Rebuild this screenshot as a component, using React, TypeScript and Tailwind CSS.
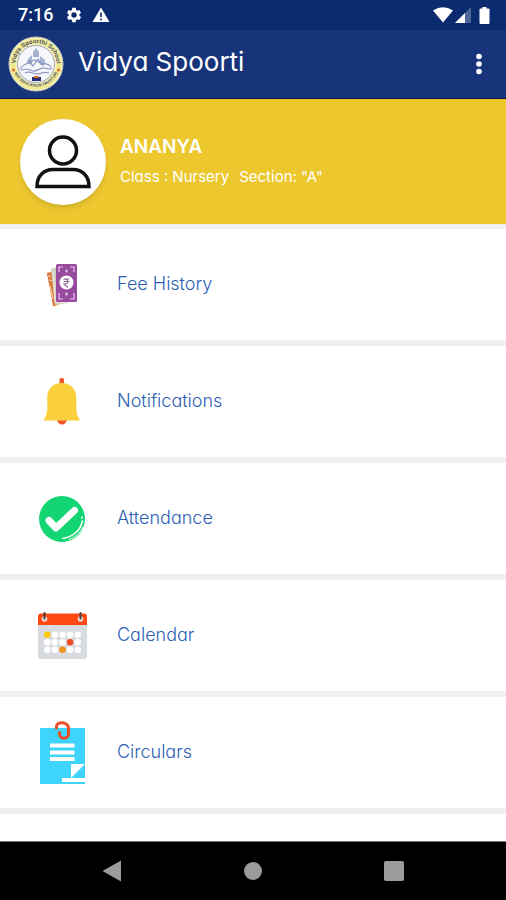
import type { ReactNode } from 'react';

const SchoolLogo = () => (
  <svg viewBox="0 0 56 56" className="size-14 shrink-0" role="img" aria-label="School logo">
    <defs>
      <path id="logo-top" d="M8.500 34 A20.500 20.500 0 1 1 47.500 34" />
      <path id="logo-bottom" d="M5.500 34 A23.500 23.500 0 0 0 50.500 34" />
    </defs>
    <circle cx="28" cy="28" r="27" fill="#f3f0c4" stroke="#c9cbb4" strokeWidth="1" />
    <circle cx="28" cy="28" r="23" fill="none" stroke="#efe98f" strokeWidth="5" />
    <circle cx="28" cy="28" r="18.500" fill="#f6f7fb" stroke="#8d93a6" strokeWidth="0.800" />
    <g fontFamily="'Liberation Sans', sans-serif" fontWeight="700" fill="#4a4e66">
      <text fontSize="6">
        <textPath href="#logo-top" startOffset="50%" textAnchor="middle">Vidya Spoorthi School</textPath>
      </text>
      <text fontSize="4">
        <textPath href="#logo-bottom" startOffset="50%" textAnchor="middle">M.P. EDUCATION TRUST (R)</textPath>
      </text>
    </g>
    <circle cx="5.500" cy="34" r="1.500" fill="#e0662e" />
    <circle cx="50.500" cy="34" r="1.500" fill="#e0662e" />
    <path d="M25 16l3-4 3 4v5h-6zM20 23l4-4v9h-5zM32 20l5 4v5h-5z" fill="#a9b1d0" />
    <path
      d="M12 33c5-7 9-5 12-8s6 1 8 2 7-1 11 4M13 34c6-2 9 0 12 1s8-4 12-3 5 2 7 0M17 37c5-3 8 1 12 1s8-3 12-1M20 24l5 6 5-7 5 7"
      fill="none"
      stroke="#8d98c3"
      strokeWidth="1.200"
    />
    <path d="M24 41h9v4h-9z" fill="#252f73" />
    <path d="M26 40h5v2h-5z" fill="#dd7435" />
  </svg>
);

const FeeIcon = () => (
  <svg viewBox="0 0 52 64" className="w-13 h-16">
    <path d="M11 20l5-1 14 29-12 5.500z" fill="#e8752f" />
    <path d="M11 20l4-.5 4 33-2 .5z" fill="#dc7a3e" />
    <path d="M12 23l3 .5M13 27l3 .5M14 33l3 13" stroke="#fbd9c0" strokeWidth="1" />
    <path d="M15 16l6-2v36l10-1 1 1-13 2z" fill="#cfd0bf" />
    <path d="M17 18l2 31 13 1" fill="none" stroke="#f2e8df" strokeWidth="1" />
    <rect x="20" y="11" width="21" height="38" rx="1.500" fill="#984a9f" />
    <path d="M23 19v-5h4M34 14h4v5M23 40v6h4M34 46h4v-6" fill="none" stroke="#e8c8eb" strokeWidth="1.200" />
    <path d="M30.500 16l1.500 2-1.500 2-1.500-2zM30.500 39l1.500 2-1.500 2-1.500-2z" fill="#e2bfe6" />
    <circle cx="30.500" cy="29.500" r="7" fill="#fff" />
    <path d="M27.500 26h6M27.500 28.500h6M28 26c5 0 5 5 0 5l4 3.500" fill="none" stroke="#93619a" strokeWidth="1.100" />
  </svg>
);

const BellIcon = () => (
  <svg viewBox="0 0 52 64" className="w-13 h-16">
    <rect x="23.500" y="8" width="4.500" height="7" rx="1.500" fill="#f0592b" />
    <path d="M21 49h10a5 5.500 0 0 1-10 0z" fill="#f0592b" />
    <path d="M25.700 13C17 13 11.300 19 11.300 27v11c0 5-1.300 8-3.800 12.500h36.500C41.500 46 40.300 43 40.300 38V27c0-8-6-14-14.600-14z" fill="#fad13d" />
  </svg>
);

const CheckIcon = () => (
  <svg viewBox="0 0 52 64" className="w-13 h-16">
    <circle cx="26" cy="32" r="23" fill="#14d574" />
    <path d="M13 33.500l7 7.500L38.500 23.500" fill="none" stroke="#fff" strokeWidth="7" strokeLinecap="round" strokeLinejoin="round" />
    <path d="M46.500 34c-2 9-9 16-20 17.500" fill="none" stroke="#fff" strokeWidth="1.500" strokeLinecap="round" />
    <path d="M46 30v1" stroke="#fff" strokeWidth="1.500" strokeLinecap="round" />
    <path d="M47 40c-3 6-7 10-14 12.500" fill="none" stroke="#fff" strokeWidth="1" />
  </svg>
);

const calendarDots = [
  ['#fdc90f', '#fff', '#fff', '#fff', '#fff'],
  ['#fff', '#fff', '#fff', '#f04b25', '#fff'],
  ['#fff', '#fff', '#ef941b', '#fff', '#fff'],
];

const CalendarIcon = () => (
  <svg viewBox="0 0 52 64" className="w-13 h-16">
    <path d="M2 18h49v34a3 3 0 0 1-3 3H5a3 3 0 0 1-3-3z" fill="#d8dbdf" />
    <path d="M5 9.500h43a3 3 0 0 1 3 3V21H2v-8.500a3 3 0 0 1 3-3z" fill="#fd4a13" />
    <circle cx="8.500" cy="15" r="2.800" fill="#e8dcda" />
    <circle cx="44.500" cy="15" r="2.800" fill="#e8dcda" />
    <path d="M8.500 9v5.500M44.500 9v5.500" stroke="#493b40" strokeWidth="2" strokeLinecap="round" />
    {calendarDots.map((row, y) =>
      row.map((color, x) => (
        <circle key={`${x}-${y}`} cx={11.3 + x * 7.6} cy={30.7 + y * 7.5} r="3.300" fill={color} />
      ))
    )}
  </svg>
);

const CircularIcon = () => (
  <svg viewBox="0 0 52 64" className="w-13 h-16">
    <path d="M4 7h45v56H4z" fill="#3fd4fc" />
    <path d="M14 22.500h24.500v4H14zM14 29.500h24.500v4H14zM14 36h24.500v4H14z" fill="#fff" />
    <path d="M35 43h14L35 57zM26 57h23v4H26z" fill="#fff" />
    <path
      d="M20.500 7V5.500c0-5.500 12-5 12 2V13c0 5.500-9 5.500-9 0v-1.500"
      fill="none"
      stroke="#ec4c27"
      strokeWidth="3"
      strokeLinecap="round"
    />
  </svg>
);

const menuItems: { label: string; icon: ReactNode }[] = [
  { label: 'Fee History', icon: <FeeIcon /> },
  { label: 'Notifications', icon: <BellIcon /> },
  { label: 'Attendance', icon: <CheckIcon /> },
  { label: 'Calendar', icon: <CalendarIcon /> },
  { label: 'Circulars', icon: <CircularIcon /> },
];

const StatusBar = () => (
  <div className="flex h-[30px] items-center bg-[#0c2a70] pl-[18px] pr-4 text-white">
    <span className="font-['Roboto',sans-serif] text-lg font-medium">7:16</span>
    <svg viewBox="0 0 24 24" className="ml-3 size-[18px]" fill="currentColor">
      <path d="M19.140 12.940c.04-.3.06-.61.06-.94s-.02-.64-.07-.94l2.030-1.580a.49.49 0 0 0 .12-.61l-1.920-3.320a.49.49 0 0 0-.59-.22l-2.390.96a7 7 0 0 0-1.620-.94l-.36-2.540a.48.48 0 0 0-.48-.41h-3.840a.48.48 0 0 0-.47.41l-.36 2.540c-.59.24-1.130.57-1.620.94l-2.390-.96a.48.48 0 0 0-.59.22L2.740 8.870a.48.48 0 0 0 .12.610l2.030 1.580a6 6 0 0 0 0 1.880l-2.030 1.580a.49.49 0 0 0-.12.610l1.920 3.320c.12.22.37.29.59.22l2.390-.96c.5.38 1.030.7 1.620.94l.36 2.540c.05.24.24.41.48.41h3.840c.24 0 .44-.17.47-.41l.36-2.540a7 7 0 0 0 1.620-.94l2.390.96c.22.08.47 0 .59-.22l1.920-3.320a.48.48 0 0 0-.12-.61zM12 15.600a3.600 3.600 0 1 1 0-7.200 3.600 3.600 0 0 1 0 7.200z" />
    </svg>
    <svg viewBox="0 0 18 16" className="ml-[9px] h-4 w-[18px]">
      <path d="M9 0.500L17.500 15H0.500z" fill="currentColor" />
      <path d="M9 5.500v4.500M9 11.500v2" stroke="#0c2a70" strokeWidth="1.600" />
    </svg>
    <div className="ml-auto flex items-center">
      <svg viewBox="0 0 20 16" className="h-4 w-5">
        <path d="M0 3.500Q10-3 20 3.500L10 15.500z" fill="currentColor" />
      </svg>
      <svg viewBox="0 0 16 16" className="ml-[2px] size-4">
        <path d="M16 0v16H0z" fill="#4d6698" />
        <path d="M10 6v10H0z" fill="currentColor" />
      </svg>
      <svg viewBox="0 0 10 17" className="ml-2 h-[17px] w-[11px]">
        <path d="M3 0h4v1.500h2a1 1 0 0 1 1 1V16a1 1 0 0 1-1 1H1a1 1 0 0 1-1-1V2.500a1 1 0 0 1 1-1h2z" fill="currentColor" />
      </svg>
    </div>
  </div>
);

const App = () => {
  return (
    <div className="flex min-h-screen flex-col bg-white font-['Inter',sans-serif] [font-feature-settings:'cv11']">
      <StatusBar />

      {/* App bar */}
      <header className="flex h-[69px] items-center border-b border-[#10104d] bg-[#17347a] pl-2 pr-[17px] text-white">
        <SchoolLogo />
        <h1 className="ml-[14px] pb-1 text-[26px] leading-8">Vidya Spoorti</h1>
        <button aria-label="More options" className="ml-auto flex h-10 w-5 items-center justify-center">
          <svg viewBox="0 0 6 22" className="h-[22px] w-1.5" fill="currentColor">
            <circle cx="3" cy="3.500" r="2.800" />
            <circle cx="3" cy="11" r="2.800" />
            <circle cx="3" cy="18.500" r="2.800" />
          </svg>
        </button>
      </header>

      {/* Student */}
      <section className="flex h-[125px] items-center bg-[#edc72e] pl-5 text-white">
        <div className="flex size-[86px] shrink-0 items-center justify-center rounded-full bg-white shadow-md">
          <svg viewBox="0 0 56 54" className="h-[54px] w-14" fill="none" stroke="#111" strokeWidth="3.500">
            <circle cx="28" cy="15.500" r="13.500" />
            <path d="M2 51.500C2 41 9 34.500 18 34.500h20c9 0 16 6.500 16 17z" />
          </svg>
        </div>
        <div className="ml-[14px] pb-[2px]">
          <h2 className="text-[19px] leading-7 font-semibold">ANANYA</h2>
          <p className="mt-1 flex gap-2.5 text-[15px] leading-6">
            <span>Class : Nursery</span>
            <span>Section: "A"</span>
          </p>
        </div>
      </section>

      {/* Menu */}
      <nav className="flex grow flex-col gap-1.5 bg-[#f0f0f0] pt-[5px]">
        {menuItems.map((item) => (
          <a key={item.label} href="#" className="flex h-[111px] items-center bg-white pl-9 text-[#2c5fb3]">
            {item.icon}
            <span className="ml-[29px] pb-[2px] text-lg font-light">{item.label}</span>
          </a>
        ))}
        <div className="grow bg-white" />
      </nav>

      {/* System navigation */}
      <footer className="grid h-[59px] grid-cols-3 items-center border-t border-[#777] bg-black px-[42px] text-[#9b9b9b]">
        <button aria-label="Back" className="flex justify-center">
          <svg viewBox="0 0 20 22" className="h-[22px] w-5" fill="currentColor">
            <path d="M0.500 11L19 0.500v21z" />
          </svg>
        </button>
        <button aria-label="Home" className="flex justify-center">
          <span className="size-[18px] rounded-full bg-current" />
        </button>
        <button aria-label="Recent apps" className="flex justify-center">
          <span className="size-5 rounded-xs bg-current" />
        </button>
      </footer>
    </div>
  );
};

export default App;
